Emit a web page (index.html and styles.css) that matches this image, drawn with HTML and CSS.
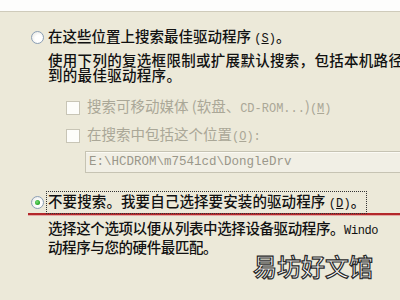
FILE: index.html
```html
<!DOCTYPE html>
<html lang="zh-CN">
<head>
<meta charset="utf-8">
<title>驱动程序搜索选项</title>
<link rel="stylesheet" href="styles.css">
</head>
<body>
<div class="hdr"></div>
<div class="main">
  <div class="row r1">
    <span class="radio"></span>
    <span class="label">在这些位置上搜索最佳驱动程序 <span class="lat">(<u>S</u>)</span>。</span>
  </div>
  <div class="desc d1">使用下列的复选框限制或扩展默认搜索，包括本机路径<br>到的最佳驱动程序。</div>
  <div class="row chk c1">
    <span class="box"></span>
    <span class="label gray">搜索可移动媒体 (软盘、<span class="lat">CD-ROM...</span>)<span class="lat">(<u>M</u>)</span></span>
  </div>
  <div class="row chk c2">
    <span class="box"></span>
    <span class="label gray">在搜索中包括这个位置<span class="lat">(<u>O</u>):</span></span>
  </div>
  <div class="field">E:\HCDROM\m7541cd\DongleDrv</div>
  <div class="row r2">
    <span class="radio on"></span>
    <span class="label focus">不要搜索。我要自己选择要安装的驱动程序 <span class="lat">(<u>D</u>)</span>。</span>
  </div>
  <div class="redline"></div>
  <div class="desc d2">选择这个选项以便从列表中选择设备驱动程序。<span class="lat">Windo</span><br>动程序与您的硬件最匹配。</div>
</div>
<div class="wm">易坊好文馆</div>
</body>
</html>
```
FILE: styles.css
```css
html, body {
  margin: 0;
  padding: 0;
}
body {
  width: 400px;
  height: 300px;
  overflow: hidden;
  position: relative;
  background: #ece9d9;
  font-family: "Noto Sans CJK SC", "Noto Sans", sans-serif;
  font-size: 14.5px;
  font-weight: 500;
  line-height: 15px;
  color: #111;
}
.hdr {
  height: 11px;
  background: #fdfdfc;
  border-bottom: 1px solid #cfcbbb;
}
.main {
  padding-left: 31px;
  white-space: nowrap;
}
.row {
  display: flex;
  align-items: center;
  height: 15px;
}
.r1 { margin-top: 18px; }
.radio {
  width: 11px;
  height: 11px;
  border: 1px solid #8b9fb6;
  border-radius: 50%;
  background: radial-gradient(circle at 60% 60%, #ffffff 35%, #e2e2dc 100%);
  margin-right: 4px;
  flex: none;
  position: relative;
}
.radio.on::after {
  content: "";
  position: absolute;
  left: 3px;
  top: 3px;
  width: 5px;
  height: 5px;
  border-radius: 50%;
  background: radial-gradient(circle at 40% 40%, #7be07b 0%, #21a121 70%);
}
.lat {
  font-family: "Liberation Mono", monospace;
  font-size: 12px;
  font-weight: 400;
}
.desc {
  padding-left: 17px;
  letter-spacing: 0.3px;
}
.d1 { margin-top: 7px; }
.chk { margin-left: 35px; }
.c1 { margin-top: 18px; }
.c2 { margin-top: 13px; }
.box {
  width: 12px;
  height: 12px;
  border: 1px solid #c8c5b6;
  background: #fdfdfa;
  margin-right: 7px;
  flex: none;
}
.gray { color: #aaa797; font-weight: 400; }
.field {
  margin: 8px 0 0 54px;
  height: 20px;
  border: 1px solid #c6c3b3;
  border-right: none;
  background: #f1efe5;
  box-shadow: inset 0 1px 0 #fbfaf4;
  font-family: "Liberation Mono", monospace;
  font-size: 12.5px;
  font-weight: 400;
  line-height: 20px;
  color: #9a978a;
  padding-left: 3px;
}
.r2 { margin-top: 22px; }
.focus {
  outline: 1px dotted #333;
  outline-offset: 1px;
  letter-spacing: 0.1px;
}
.redline {
  margin: 3px 0 0 -3px;
  height: 2px;
  background: #b3282b;
  box-shadow: 0 1px 0 #e4a9a4;
}
.d2 { margin-top: 5px; letter-spacing: -0.4px; }
.wm {
  position: absolute;
  left: 253px;
  top: 253px;
  font-family: "Noto Sans CJK SC", sans-serif;
  font-size: 24px;
  font-weight: 500;
  line-height: 26px;
  color: #fff;
  -webkit-text-stroke: 1.2px #2a2a2a;
  letter-spacing: 0;
}
```
